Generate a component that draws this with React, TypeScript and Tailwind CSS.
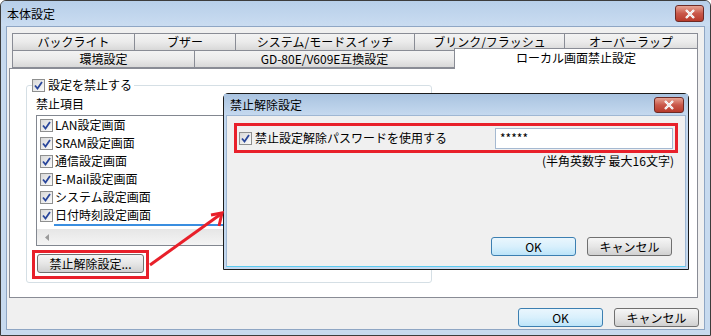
import type { ReactNode } from "react"

const CheckBox = () => (
  <span className="inline-flex h-[13px] w-[13px] shrink-0 items-center justify-center border border-[#8e8f8f] bg-linear-to-br from-[#d8d8d8] to-[#fbfbfb]">
    <svg width="9" height="9" viewBox="0 0 9 9">
      <path d="M1 4.5 L3.5 7.5 L8 1" stroke="#29469b" strokeWidth="1.8" fill="none" />
    </svg>
  </span>
)

const CloseButton = ({ className }: { className?: string }) => (
  <span
    className={`flex items-center justify-center rounded-[3px] border border-[#6d2a25] bg-linear-to-b from-[#e6a394] via-[#c9584a] to-[#b83a2b] ${className}`}
  >
    <svg width="12" height="10" viewBox="0 0 12 10">
      <path d="M2 1 L10 9 M10 1 L2 9" stroke="#fff" strokeWidth="2.4" />
      <path d="M2 1 L10 9 M10 1 L2 9" stroke="#555" strokeWidth="0.4" fill="none" opacity="0.3" />
    </svg>
  </span>
)

const Button = ({ children, primary, className }: { children: ReactNode; primary?: boolean; className?: string }) => (
  <button
    className={`flex h-[19px] items-center justify-center rounded-[3px] border text-[12px] leading-none text-black ${
      primary
        ? "border-[#3c7fb1] bg-linear-to-b from-[#eaf6fd] via-[#d9f0fc] to-[#bce4f9]"
        : "border-[#707070] bg-linear-to-b from-[#f6f6f6] via-[#e6e6e6] to-[#d0d0d0]"
    } ${className}`}
  >
    {children}
  </button>
)

const Tab = ({ label, w, selected }: { label: string; w: string; selected?: boolean }) => (
  <div
    className={`-ml-px flex items-center justify-center border border-[#898c95] text-[12px] leading-none text-black first:ml-0 ${w} ${
      selected
        ? "relative z-10 -mt-[2px] h-[21px] border-b-0 bg-white pb-[2px]"
        : "h-[18px] bg-linear-to-b from-[#f3f3f3] via-[#ebebeb] to-[#d8d8d8]"
    }`}
  >
    {label}
  </div>
)

const items = ["LAN設定画面", "SRAM設定画面", "通信設定画面", "E-Mail設定画面", "システム設定画面", "日付時刻設定画面"]

export default function App() {
  return (
    <div className="relative flex h-[336px] w-[711px] flex-col overflow-hidden rounded-t-[6px] border border-[#3c3c3c] bg-[#c7daef] font-['Noto_Sans_CJK_JP','Noto_Sans',sans-serif]">
      {/* title bar */}
      <div className="flex h-[25px] shrink-0 items-center bg-linear-to-b from-[#b7cfe9] to-[#cadcf1] pl-[6px] pr-[6px]">
        <span className="text-[12px] text-black">本体設定</span>
        <CloseButton className="ml-auto h-[17px] w-[29px]" />
      </div>

      {/* client area */}
      <div className="mx-[5px] mb-[5px] flex flex-1 flex-col border border-[#8fa6c4] bg-[#f0f0f0] pl-[2px] pr-[5px] pt-[6px]">
        <div className="flex flex-col pl-[3px]">
          <div className="flex">
            <Tab label="バックライト" w="w-[123px]" />
            <Tab label="ブザー" w="w-[102px]" />
            <Tab label="システム/モードスイッチ" w="w-[180px]" />
            <Tab label="ブリンク/フラッシュ" w="w-[151px]" />
            <Tab label="オーバーラップ" w="w-[134px]" />
          </div>
          <div className="-mt-px flex">
            <Tab label="環境設定" w="w-[183px]" />
            <Tab label="GD-80E/V609E互換設定" w="w-[261px]" />
            <Tab label="ローカル画面禁止設定" w="w-[244px]" selected />
          </div>
        </div>

        {/* tab panel */}
        <div className="-mt-px h-[230px] w-[689px] border border-[#898c95] bg-white pl-[16px] pt-[16px]">
          <div className="relative h-[198px] w-[406px] rounded-[3px] border border-[#d5dfe5]">
            <div className="absolute -top-[8px] left-[5px] flex items-center gap-[3px] bg-white pr-[2px]">
              <CheckBox />
              <span className="text-[12px] leading-[14px] text-black">設定を禁止する</span>
            </div>
            <div className="flex flex-col pl-[9px] pt-[11px]">
              <span className="text-[12px] leading-[14px] text-black">禁止項目</span>
              <div className="mt-[4px] flex h-[131px] w-[383px] flex-col border border-[#828790] bg-white">
                <div className="flex flex-1 flex-col pl-[3px] pt-0">
                  {items.map((it) => (
                    <div key={it} className="flex h-[18px] items-center gap-[2px]">
                      <CheckBox />
                      <span className="text-[12px] leading-none text-black">{it}</span>
                    </div>
                  ))}
                  <div className="ml-[14px] h-[2px] bg-[#3a8ee0]" />
                </div>
                <div className="flex h-[16px] items-center bg-linear-to-b from-[#e6e6e6] to-[#f4f4f4] pl-[8px]">
                  <svg width="4" height="7" viewBox="0 0 4 7">
                    <path d="M4 0 L0 3.5 L4 7 Z" fill="#9a9a9a" />
                  </svg>
                </div>
              </div>
              <div className="-ml-[4px] mt-[4px] w-[117px] border-[3px] border-[#e8202a] pb-[3px] pl-[2px] pr-[1px] pt-[1px]">
                <Button className="w-[107px]">禁止解除設定...</Button>
              </div>
            </div>
          </div>
        </div>

        <div className="mt-[10px] flex justify-end gap-[11px]">
          <Button primary className="w-[85px]">OK</Button>
          <Button className="w-[85px]">キャンセル</Button>
        </div>
      </div>

      {/* sub dialog */}
      <div className="absolute left-[222px] top-[92px] flex h-[177px] w-[466px] flex-col rounded-t-[5px] border border-[#1b1b1b] bg-[#c3d8ef]">
        <div className="flex h-[21px] shrink-0 items-center bg-linear-to-b from-[#a9c3e0] to-[#c5d9ef] pl-[6px] pr-[4px]">
          <span className="text-[12px] text-black">禁止解除設定</span>
          <CloseButton className="ml-auto h-[16px] w-[30px]" />
        </div>
        <div className="mx-[2px] mb-[2px] flex flex-1 flex-col border border-[#9fb7d3] border-b-[#5ccbf0] bg-[#f0f0f0] pl-[7px] pr-[8px] pt-[7px]">
          <div className="flex h-[30px] w-[444px] items-center border-[3px] border-[#e8202a] pl-[2px] pr-[2px]">
            <CheckBox />
            <span className="ml-[3px] text-[12px] leading-none text-black">禁止設定解除パスワードを使用する</span>
            <div className="ml-auto flex h-[21px] w-[178px] items-center border border-[#a5b9d1] bg-white pl-[4px] text-[12px] leading-none text-black">
              *****
            </div>
          </div>
          <div className="mt-[1px] pr-[3px] text-right text-[12px] leading-[14px] text-black">(半角英数字 最大16文字)</div>
          <div className="mt-auto mb-[10px] flex justify-end gap-[11px] pr-[5px]">
            <Button primary className="w-[85px]">OK</Button>
            <Button className="w-[85px]">キャンセル</Button>
          </div>
        </div>
      </div>

      {/* annotation arrow */}
      <svg className="pointer-events-none absolute left-0 top-0" width="711" height="336">
        <path d="M149 264 L220 213" stroke="#e8202a" strokeWidth="3" fill="none" />
        <path d="M210 214 L221 212 L218 225" stroke="#e8202a" strokeWidth="3" fill="none" />
      </svg>
    </div>
  )
}
